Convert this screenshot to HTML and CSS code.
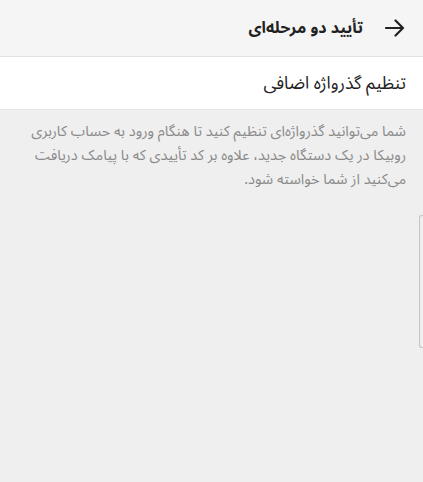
FILE: index.html
```html
<!DOCTYPE html>
<html lang="fa" dir="rtl">
<head>
<meta charset="utf-8">
<link rel="stylesheet" href="styles.css">
</head>
<body>
<div class="page">
  <header class="bar">
    <svg class="back" width="20" height="18" viewBox="0 0 20 18"><path d="M1 9H18M10.5 1.5L18 9L10.5 16.5" fill="none" stroke="#222" stroke-width="2.2" stroke-linecap="round" stroke-linejoin="round"/></svg>
    <h1 class="title">تأیید دو مرحله‌ای</h1>
  </header>
  <div class="row">تنظیم گذرواژه اضافی</div>
  <p class="desc">شما می‌توانید گذرواژه‌ای تنظیم کنید تا هنگام ورود به حساب کاربری روبیکا در یک دستگاه جدید، علاوه بر کد تأییدی که با پیامک دریافت می‌کنید از شما خواسته شود.</p>
  <div class="scroll"></div>
</div>
</body>
</html>
```
FILE: styles.css
```css
* { box-sizing: border-box; }
html, body { margin: 0; padding: 0; }
body {
  width: 423px;
  height: 482px;
  overflow: hidden;
  background: #efefef;
  font-family: "Noto Sans Arabic", "DejaVu Sans", sans-serif;
}
.page { position: relative; height: 482px; }
.bar {
  height: 57px;
  background: #f5f5f5;
  border-bottom: 1px solid #e2e2e2;
  display: flex;
  align-items: center;
  padding-right: 18px;
  gap: 22px;
}
.back { flex: none; }
.title {
  margin: 0;
  font-size: 16px;
  font-weight: bold;
  color: #222;
}
.row {
  height: 53px;
  background: #fff;
  border-bottom: 1px solid #e6e6e6;
  display: flex;
  align-items: center;
  padding-right: 17px;
  font-size: 17.5px;
  color: #222;
}
.desc {
  margin: 0;
  padding: 10px 17px 0 14px;
  font-size: 14.5px;
  line-height: 24px;
  color: #8a8a8a;
}
.scroll {
  position: absolute;
  right: 0;
  top: 215px;
  width: 4px;
  height: 133px;
  border: 1px solid #c4c4c4;
  border-right: none;
  border-radius: 3px 0 0 3px;
}
```
